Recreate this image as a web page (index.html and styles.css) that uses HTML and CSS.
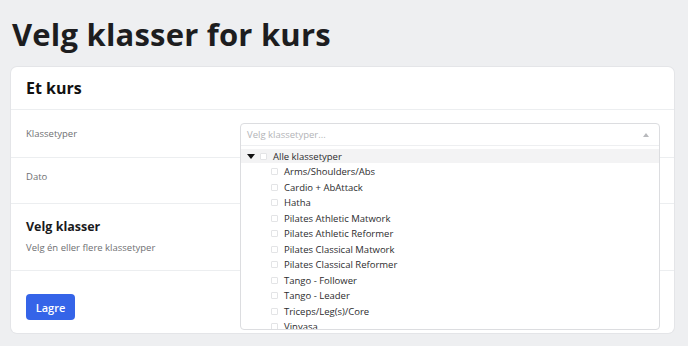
FILE: index.html
```html
<!DOCTYPE html>
<html lang="no">
<head>
<meta charset="utf-8">
<title>Velg klasser for kurs</title>
<link rel="stylesheet" href="styles.css">
</head>
<body>
<main class="page">
  <h1 class="title">Velg klasser for kurs</h1>
  <section class="card">
    <header class="card-head"><h2>Et kurs</h2></header>
    <div class="row row-types">
      <div class="label">Klassetyper</div>
      <div class="field">
        <div class="select">
          <div class="select-input">
            <span class="placeholder">Velg klassetyper...</span>
            <span class="caret"></span>
          </div>
          <div class="dropdown">
            <ul class="tree">
              <li class="opt root"><span class="toggle"></span><span class="box"></span>Alle klassetyper</li>
              <li class="opt"><span class="box"></span>Arms/Shoulders/Abs</li>
              <li class="opt"><span class="box"></span>Cardio + AbAttack</li>
              <li class="opt"><span class="box"></span>Hatha</li>
              <li class="opt"><span class="box"></span>Pilates Athletic Matwork</li>
              <li class="opt"><span class="box"></span>Pilates Athletic Reformer</li>
              <li class="opt"><span class="box"></span>Pilates Classical Matwork</li>
              <li class="opt"><span class="box"></span>Pilates Classical Reformer</li>
              <li class="opt"><span class="box"></span>Tango - Follower</li>
              <li class="opt"><span class="box"></span>Tango - Leader</li>
              <li class="opt"><span class="box"></span>Triceps/Leg(s)/Core</li>
              <li class="opt"><span class="box"></span>Vinyasa</li>
            </ul>
          </div>
        </div>
      </div>
    </div>
    <div class="row row-date">
      <div class="label">Dato</div>
    </div>
    <div class="section">
      <h3>Velg klasser</h3>
      <p>Velg én eller flere klassetyper</p>
    </div>
    <footer class="card-foot">
      <button class="btn">Lagre</button>
    </footer>
  </section>
</main>
</body>
</html>
```

FILE: styles.css
```css
* { box-sizing: border-box; }
html, body { margin: 0; padding: 0; }
body {
  background: #eeeff1;
  font-family: "Open Sans", "Noto Sans", sans-serif;
  color: #1e1e1e;
  height: 346px;
  overflow: hidden;
}
.page { padding: 12px 14px 0 11px; }
.title {
  margin: 0 0 0 1px;
  font-size: 31px;
  line-height: 44px;
  font-weight: 700;
  letter-spacing: 0.2px;
  color: #1d1d1f;
}
.card {
  margin-top: 11px;
  background: #fff;
  border-radius: 6px;
  box-shadow: 0 0 0 1px #e4e5e8;
  height: 266px;
}
.card-head {
  height: 43px;
  padding: 0 15px;
  display: flex;
  align-items: center;
  border-bottom: 1px solid #eceef0;
}
.card-head h2 { margin: 0; font-size: 16px; font-weight: 700; color: #111; }
.row {
  display: grid;
  grid-template-columns: 214px 1fr;
  padding: 0 15px;
  border-bottom: 1px solid #eceef0;
}
.row-types { height: 48px; padding-top: 13px; }
.row-date { height: 46px; padding-top: 8px; }
.label {
  font-size: 9.5px;
  line-height: 22px;
  color: #6f7073;
}
.field { position: relative; }
.select {
  position: absolute;
  left: 0; top: 0;
  width: 420px;
  z-index: 2;
  background: #fff;
  border: 1px solid #dcdde0;
  border-radius: 4px;
}
.select-input {
  height: 22px;
  display: flex;
  align-items: center;
  justify-content: space-between;
  padding: 0 10px 0 6px;
  border-bottom: 1px solid #eeeff1;
}
.placeholder { font-size: 9.5px; color: #b3b4b7; }
.caret {
  width: 0; height: 0;
  border-left: 3px solid transparent;
  border-right: 3px solid transparent;
  border-bottom: 4px solid #b8b9bc;
}
.dropdown { height: 183px; overflow: hidden; padding-top: 3px; }
.tree { list-style: none; margin: 0; padding: 0; }
.opt {
  height: 15.5px;
  display: flex;
  align-items: center;
  padding-left: 30px;
  font-size: 9.5px;
  color: #2c2c2e;
}
.opt.root { padding-left: 6px; background: #f3f3f4; height: 14px; margin-bottom: 1px; }
.toggle {
  width: 0; height: 0;
  border-left: 4px solid transparent;
  border-right: 4px solid transparent;
  border-top: 5px solid #111;
  margin-right: 5px;
}
.box {
  width: 7px; height: 7px;
  border: 1px solid #e3e4e6;
  border-radius: 1px;
  margin-right: 6px;
  background: #fff;
}
.section {
  height: 67px;
  padding: 15px 15px 0;
  border-bottom: 1px solid #eceef0;
}
.section h3 { margin: 0; font-size: 12.5px; line-height: 16px; font-weight: 700; color: #1a1a1c; }
.section p { margin: 7px 0 0; font-size: 9.5px; line-height: 12px; color: #6f7073; }
.card-foot { padding: 23px 15px 0; }
.btn {
  width: 49px; height: 26px;
  border: 0;
  border-radius: 4px;
  background: #3564e8;
  color: #fff;
  font-family: inherit;
  font-size: 11px;
  font-weight: 600;
  padding: 0;
}
```
